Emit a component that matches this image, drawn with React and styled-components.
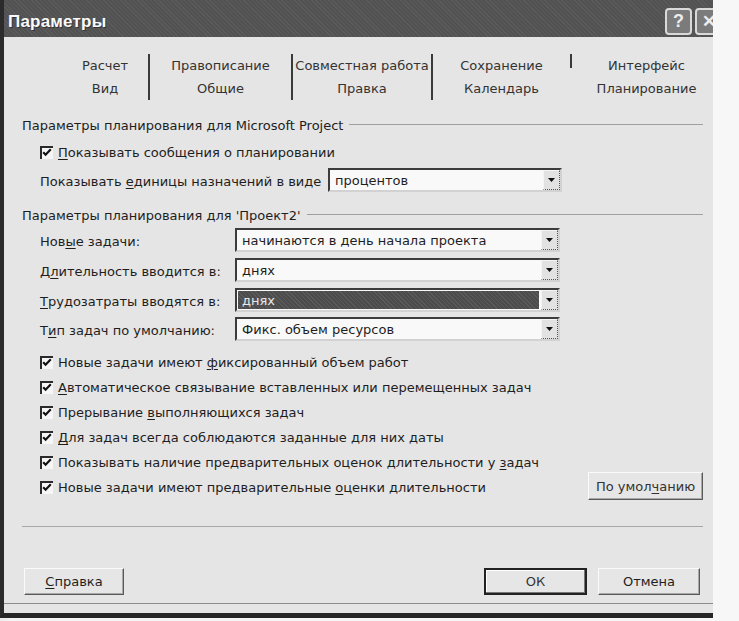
import React from 'react';
import styled, { createGlobalStyle } from 'styled-components';

const Global = createGlobalStyle`
  html, body { margin: 0; padding: 0; background: #f3f3f3; }
  body { font-family: "DejaVu Sans", "Liberation Sans", sans-serif; color: #1e1e1e; }
  #root { width: 739px; height: 621px; overflow: hidden; }
`;

const Page = styled.div`
  width: 739px;
  height: 621px;
  display: flex;
  align-items: flex-start;
  background: linear-gradient(to right, #ececec 0px, #f4f4f4 12px, #f7f7f7 100%);
`;

const Dialog = styled.div`
  width: 713px;
  height: 618px;
  box-sizing: border-box;
  border-left: 4px solid #2b2b2b;
  border-bottom: 5px solid #262626;
  background: #e5e5e5;
  display: flex;
  flex-direction: column;
  overflow: hidden;
`;

const TitleBar = styled.div`
  height: 37px;
  flex: none;
  box-sizing: border-box;
  padding: 6px 0 0 4px;
  display: flex;
  align-items: center;
  background-color: #525252;
  background-image: repeating-linear-gradient(45deg, rgba(255,255,255,0.05) 0 1px, transparent 1px 3px);
`;

const TitleText = styled.div`
  font-family: "Liberation Sans", Arial, sans-serif;
  font-weight: bold;
  font-size: 17px;
  color: #fafafa;
  text-shadow: 1px 1px 0 #333;
  letter-spacing: 0.2px;
`;

const TitleButtons = styled.div`
  margin-left: auto;
  margin-right: -9px;
  display: flex;
  gap: 3px;
`;

const TitleButton = styled.div`
  width: 27px;
  height: 27px;
  box-sizing: border-box;
  border: 2px solid #d9d9d9;
  border-radius: 4px;
  background: #7b7b7b;
  color: #ececec;
  font-family: "Liberation Sans", Arial, sans-serif;
  font-weight: bold;
  font-size: ${p => p.$size || 18}px;
  display: flex;
  align-items: center;
  justify-content: center;
`;

const Body = styled.div`
  flex: 1;
  box-sizing: border-box;
  padding: 0 10px 0 18px;
  border-bottom: 1px solid #8c8c8c;
  display: flex;
  flex-direction: column;
  font-size: 13px;
`;

const BottomStrip = styled.div`
  height: 9px;
  flex: none;
`;

const TabGrid = styled.div`
  margin: 17px -10px 0 40px;
  display: grid;
  grid-template-columns: 88px 143px 140px 139px 1fr;
  grid-template-rows: 23px 23px;
  color: #333;
`;

const TabCell = styled.div`
  position: relative;
  display: flex;
  align-items: center;
  justify-content: center;
  padding-left: ${p => p.$pad || 0}px;
  border-right: 2px solid ${p => (p.$sep === 'full' ? '#3a3a3a' : 'transparent')};
  white-space: nowrap;
  &::after {
    content: '';
    display: ${p => (p.$sep === 'short' ? 'block' : 'none')};
    position: absolute;
    right: -2px;
    top: 0;
    width: 2px;
    height: 14px;
    background: #3a3a3a;
  }
`;

const Row = styled.div`
  height: ${p => p.$h || 24}px;
  margin-top: ${p => p.$mt || 0}px;
  padding-left: ${p => p.$indent || 0}px;
  display: flex;
  align-items: center;
  flex: none;
  white-space: nowrap;
`;

const GroupLine = styled.div`
  flex: 1;
  margin-left: 6px;
  border-top: 1px solid #a0a0a0;
  margin-top: -1px;
`;

const Label = styled.div`
  width: ${p => p.$w}px;
  flex: none;
  padding-top: 2px;
`;

const U = styled.span`
  text-decoration: underline;
  text-underline-offset: 2px;
  text-decoration-thickness: 1px;
`;

const Combo = styled.div`
  width: ${p => p.$w}px;
  height: 24px;
  box-sizing: border-box;
  border: 2px solid;
  border-color: #3c3c3c #d2d2d2 #d2d2d2 #3c3c3c;
  background: #f9f9f9;
  display: flex;
  align-items: stretch;
`;

const ComboText = styled.div`
  flex: 1;
  display: flex;
  align-items: center;
  padding-left: 4px;
  margin: 1px 2px 1px 1px;
  background: ${p => (p.$selected ? '#4c4c4c' : 'transparent')};
  background-image: ${p => (p.$selected ? 'repeating-linear-gradient(45deg, rgba(255,255,255,0.08) 0 1px, transparent 1px 3px)' : 'none')};
  color: ${p => (p.$selected ? '#e8e8e8' : '#1e1e1e')};
`;

const ArrowBtn = styled.div`
  width: 17px;
  flex: none;
  box-sizing: border-box;
  background: #e2e2e2;
  border-right: 1px dotted #555;
  border-bottom: 1px dotted #555;
  border-left: 1px solid #f4f4f4;
  border-top: 1px solid #f4f4f4;
  display: flex;
  align-items: center;
  justify-content: center;
`;

const Check = styled.svg`
  flex: none;
  margin-right: 5px;
`;

const PushButton = styled.div`
  width: ${p => p.$w}px;
  height: ${p => p.$h || 27}px;
  box-sizing: border-box;
  flex: none;
  align-self: ${p => p.$self || 'auto'};
  margin-left: ${p => p.$ml || 0}px;
  background: #e6e6e6;
  border: ${p => (p.$default ? '2px solid #222' : '1px solid')};
  border-color: ${p => (p.$default ? '#222' : '#fbfbfb #5a5a5a #5a5a5a #fbfbfb')};
  box-shadow: ${p => (p.$default ? 'inset -1px -1px 0 #777, inset 1px 1px 0 #fff' : 'inset -1px -1px 0 #a8a8a8')};
  display: flex;
  align-items: center;
  justify-content: center;
  color: ${p => p.$color || '#1e1e1e'};
  font-size: 13px;
`;

const Divider = styled.div`
  margin-top: ${p => p.$mt}px;
  height: 0;
  border-top: 1px solid #a8a8a8;
  flex: none;
`;

const ButtonRow = styled.div`
  margin: 41px 3px 0 2px;
  height: 27px;
  display: flex;
  align-items: center;
  flex: none;
`;

const Spacer = styled.div`
  flex: 1;
`;

const CheckBox = () => (
  <Check width="13" height="13" viewBox="0 0 13 13">
    <rect x="0" y="0" width="13" height="13" fill="#f6f6f6" />
    <path d="M1 13V1h12" stroke="#2a2a2a" strokeWidth="2" fill="none" />
    <path d="M3.2 6.2l2.4 2.6L10.8 3.2" stroke="#111" strokeWidth="2.1" fill="none" />
  </Check>
);

const Arrow = () => (
  <svg width="7" height="4" viewBox="0 0 7 4">
    <path d="M0 0h7L3.5 4z" fill="#111" />
  </svg>
);

const ComboBox = ({ w, value, selected }) => (
  <Combo $w={w}>
    <ComboText $selected={selected}>{value}</ComboText>
    <ArrowBtn>
      <Arrow />
    </ArrowBtn>
  </Combo>
);

const CheckRow = ({ children, mt, extra }) => (
  <Row $h={25} $mt={mt} $indent={18}>
    <CheckBox />
    <span>{children}</span>
    {extra}
  </Row>
);

export default function App() {
  return (
    <Page>
      <Global />
      <Dialog>
        <TitleBar>
          <TitleText>Параметры</TitleText>
          <TitleButtons>
            <TitleButton>?</TitleButton>
            <TitleButton $size={17}>✕</TitleButton>
          </TitleButtons>
        </TitleBar>
        <Body>
          <TabGrid>
            <TabCell $sep="full">Расчет</TabCell>
            <TabCell $sep="full">Правописание</TabCell>
            <TabCell $sep="full">Совместная работа</TabCell>
            <TabCell $sep="short">Сохранение</TabCell>
            <TabCell $pad={10}>Интерфейс</TabCell>
            <TabCell $sep="full">Вид</TabCell>
            <TabCell $sep="full">Общие</TabCell>
            <TabCell $sep="full">Правка</TabCell>
            <TabCell>Календарь</TabCell>
            <TabCell $pad={10}>Планирование</TabCell>
          </TabGrid>

          <Row $mt={13}>
            <span>Параметры планирования для Microsoft Project</span>
            <GroupLine />
          </Row>
          <Row $mt={3} $indent={18}>
            <CheckBox />
            <span><U>П</U>оказывать сообщения о планировании</span>
          </Row>
          <Row $mt={4} $indent={18}>
            <Label $w={288}>Показывать <U>е</U>диницы назначений в виде</Label>
            <ComboBox w={234} value="процентов" />
          </Row>

          <Row $mt={11}>
            <span>Параметры планирования для 'Проект2'</span>
            <GroupLine />
          </Row>
          <Row $mt={1} $indent={18}>
            <Label $w={195}>Нов<U>ы</U>е задачи:</Label>
            <ComboBox w={325} value="начинаются в день начала проекта" />
          </Row>
          <Row $mt={6} $indent={18}>
            <Label $w={195}>Д<U>л</U>ительность вводится в:</Label>
            <ComboBox w={325} value="днях" />
          </Row>
          <Row $mt={6} $indent={18}>
            <Label $w={195}><U>Т</U>рудозатраты вводятся в:</Label>
            <ComboBox w={325} value="днях" selected />
          </Row>
          <Row $mt={5} $indent={18}>
            <Label $w={195}>Т<U>и</U>п задач по умолчанию:</Label>
            <ComboBox w={325} value="Фикс. объем ресурсов" />
          </Row>

          <CheckRow mt={9}>Новые задачи имеют <U>ф</U>иксированный объем работ</CheckRow>
          <CheckRow><U>А</U>втоматическое связывание вставленных или перемещенных задач</CheckRow>
          <CheckRow>Прерывание <U>в</U>ыполняющихся задач</CheckRow>
          <CheckRow><U>Д</U>ля задач всегда соблюдаются заданные для них даты</CheckRow>
          <CheckRow>Показывать наличие предварительных оценок длительности у <U>з</U>адач</CheckRow>
          <CheckRow
            extra={
              <>
                <Spacer />
                <PushButton $w={115} $h={28} $self="flex-end" $color="#333">
                  По умол<U>ч</U>анию
                </PushButton>
              </>
            }
          >
            Новые задачи имеют предварительные <U>о</U>ценки длительности
          </CheckRow>

          <Divider $mt={26} />

          <ButtonRow>
            <PushButton $w={100}><U>С</U>правка</PushButton>
            <Spacer />
            <PushButton $w={103} $default $color="#333">ОК</PushButton>
            <PushButton $w={102} $ml={11}>Отмена</PushButton>
          </ButtonRow>
        </Body>
        <BottomStrip />
      </Dialog>
    </Page>
  );
}
